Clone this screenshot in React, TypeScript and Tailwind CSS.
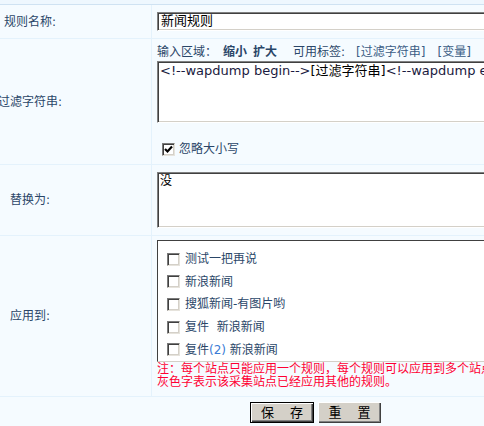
import React from 'react';

// Rule editor form (old-style admin table)

const cjk = { fontFamily: '"DejaVu Sans", "Noto Sans CJK SC", sans-serif' };

function Box({ checked = false }: { checked?: boolean }) {
  return (
    <span className="inline-flex h-[13px] w-[13px] shrink-0 items-center justify-center border border-t-[#7a7a7a] border-l-[#7a7a7a] border-b-[#e6e3dc] border-r-[#e6e3dc] bg-white shadow-[inset_1px_1px_0_#404040,inset_-1px_-1px_0_#d4d0c8]">
      {checked && (
        <svg width="9" height="9" viewBox="0 0 9 9">
          <path d="M1 4 L3.5 6.5 L8 1.5" stroke="#000" strokeWidth="2.2" fill="none" />
        </svg>
      )}
    </span>
  );
}

function Label({ text }: { text: string }) {
  return (
    <div className="flex w-[152px] shrink-0 items-center border-r border-[#e4f2fc]">
      <div className="flex w-[60px] justify-center whitespace-nowrap">{text}</div>
    </div>
  );
}

const fieldBorder =
  'border border-t-[#808080] border-l-[#808080] border-b-[#ffffff] border-r-[#ffffff] shadow-[inset_1px_1px_0_#404040,inset_-1px_-1px_0_#d4d0c8] bg-white';

const sites = [
  { name: '测试一把再说' },
  { name: '新浪新闻' },
  { name: '搜狐新闻-有图片哟' },
  { name: '复件  新浪新闻' },
  { name: '复件', num: '(2)', rest: ' 新浪新闻' },
];

export default function App() {
  return (
    <div className="h-[426px] w-[484px] overflow-hidden bg-[#f5fbff] text-[12px] leading-[14px] text-[#2a4668]" style={cjk}>
      <div className="h-[4px] bg-[#eef7fe]" />
      <div className="w-[720px] border-t border-[#cfe2f2]">
        {/* 规则名称 */}
        <div className="flex border-b border-[#e4f2fc]">
          <Label text="规则名称:" />
          <div className="flex-1 pt-[7px] pb-[7px] pl-[5px]">
            <div className={`${fieldBorder} h-[19px] w-[520px] px-[3px] text-[13px] leading-[16px] text-black`}>新闻规则</div>
          </div>
        </div>

        {/* 过滤字符串 */}
        <div className="flex border-b border-[#e4f2fc]">
          <Label text="过滤字符串:" />
          <div className="flex-1 pt-[6px] pb-[8px] pl-[5px]">
            <div className="flex items-center whitespace-nowrap">
              <span>输入区域：</span>
              <span className="ml-[6px] font-bold">缩小</span>
              <span className="ml-[6px] font-bold">扩大</span>
              <span className="ml-[16px]">可用标签:</span>
              <span className="ml-[11px] text-[#3b5d85]">[过滤字符串]</span>
              <span className="ml-[12px] text-[#3b5d85]">[变量]</span>
            </div>
            <div className={`${fieldBorder} mt-[2px] h-[62px] w-[520px] whitespace-nowrap px-[2px] pt-[1px] text-[13px] leading-[16px] text-[#1a1a40]`}>
              &lt;!--wapdump begin--&gt;<span className="text-black">[过滤字符串]</span>&lt;!--wapdump end--&gt;
            </div>
            <div className="mt-[19px] flex items-center gap-[4px] pl-[5px]">
              <Box checked />
              <span>忽略大小写</span>
            </div>
          </div>
        </div>

        {/* 替换为 */}
        <div className="flex border-b border-[#e4f2fc]">
          <Label text="替换为:" />
          <div className="flex-1 pt-[7px] pb-[7px] pl-[5px]">
            <div className={`${fieldBorder} h-[56px] w-[520px] px-[2px] pt-[1px] leading-[15px] text-black`}>没</div>
          </div>
        </div>

        {/* 应用到 */}
        <div className="flex border-b border-[#e4f2fc]">
          <Label text="应用到:" />
          <div className="flex-1 pt-[4px] pb-[7px] pl-[5px]">
            <div className="flex h-[122px] w-[520px] flex-col border border-t-[#404040] border-l-[#404040] border-b-[#d4d0c8] border-r-[#d4d0c8] bg-white pl-[9px] pt-[7px]">
              {sites.map((s, i) => (
                <div key={i} className="flex h-[24px] items-center gap-[5px] whitespace-pre">
                  <Box />
                  <span>
                    {s.name}
                    {s.num && <span className="text-[#3a7bd5]">{s.num}</span>}
                    {s.rest}
                  </span>
                </div>
              ))}
            </div>
            <div className="mt-[1px] whitespace-nowrap leading-[13px] text-[#ff0033]">
              <div>注：每个站点只能应用一个规则，每个规则可以应用到多个站点。</div>
              <div>灰色字表示该采集站点已经应用其他的规则。</div>
            </div>
          </div>
        </div>

        {/* buttons */}
        <div className="flex gap-[4px] pt-[5px] pl-[250px]">
          <button className="h-[21px] w-[64px] border border-black bg-[#d4d0c8] pl-[6px] text-[13px] tracking-[6px] text-black shadow-[inset_1px_1px_0_#ffffff,inset_-1px_-1px_0_#404040,inset_-2px_-2px_0_#808080]">
            保 存
          </button>
          <button className="h-[21px] w-[63px] bg-[#d4d0c8] pl-[6px] text-[13px] tracking-[6px] text-black shadow-[inset_1px_1px_0_#ffffff,inset_-1px_-1px_0_#404040,inset_-2px_-2px_0_#808080]">
            重 置
          </button>
        </div>
      </div>
    </div>
  );
}
